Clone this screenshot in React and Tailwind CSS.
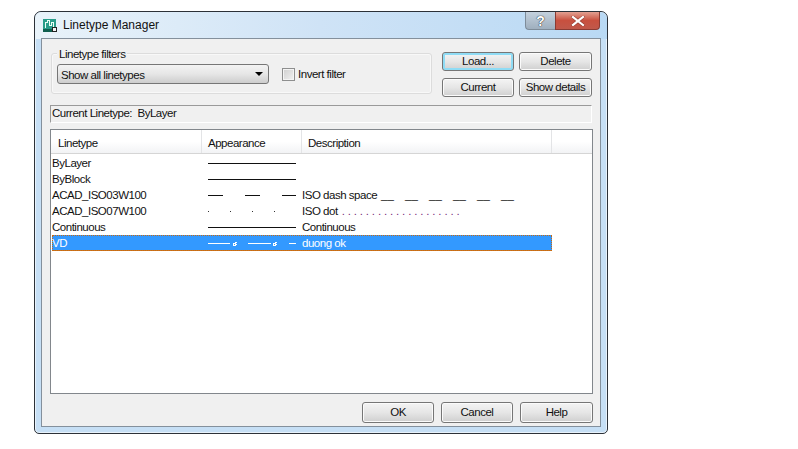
const font = { fontFamily: '"Liberation Sans", Arial, sans-serif' };

function Btn({ children, className = "" }) {
  return (
    <button
      className={`flex items-center justify-center rounded-[3px] border border-[#767676] bg-gradient-to-b from-[#f4f4f4] via-[#e6e6e6] to-[#cfcfcf] text-[11.5px] tracking-[-0.48px] text-[#111] shadow-[inset_0_0_0_1px_#fbfbfb] ${className}`}
    >
      {children}
    </button>
  );
}

function Ok({ x }) {
  return (
    <g shapeRendering="crispEdges" fill="none" stroke="white" strokeWidth="1">
      <rect x={x + 1.5} y="4.5" width="2" height="2" />
      <path d={`M${x + 3} 3.5H${x + 5}M${x + 4} 5.5H${x + 5}`} />
    </g>
  );
}

function Appearance({ type }) {
  const cls = "h-[9px] w-[90px] block";
  if (type === "solid")
    return (
      <svg className={cls} viewBox="0 0 90 9" shapeRendering="crispEdges">
        <path d="M0 4.5H88" stroke="#111" />
      </svg>
    );
  if (type === "dash")
    return (
      <svg className={cls} viewBox="0 0 90 9" shapeRendering="crispEdges">
        <path d="M0 4.5H15M37 4.5H52M74 4.5H88" stroke="#111" />
      </svg>
    );
  if (type === "dot")
    return (
      <svg className={cls} viewBox="0 0 90 9" shapeRendering="crispEdges">
        <path d="M0 4.5H1M22 4.5H23M44 4.5H45M66 4.5H67" stroke="#333" />
      </svg>
    );
  return (
    <svg className={cls} viewBox="0 0 90 9">
      <path d="M0 4.5H22M40 4.5H63M81 4.5H88" stroke="white" strokeWidth="1" shapeRendering="crispEdges" />
      <Ok x={24} />
      <Ok x={64} />
    </svg>
  );
}

const rows = [
  { name: "ByLayer", type: "solid", desc: null },
  { name: "ByBlock", type: "solid", desc: null },
  {
    name: "ACAD_ISO03W100",
    type: "dash",
    desc: (
      <span className="flex">
        <span>ISO dash space</span>
        <span className="ml-[4px] flex gap-[11.2px] tracking-normal">
          {[0, 1, 2, 3, 4, 5].map((i) => (
            <span key={i}>__</span>
          ))}
        </span>
      </span>
    ),
  },
  {
    name: "ACAD_ISO07W100",
    type: "dot",
    desc: (
      <span className="flex">
        <span>ISO dot</span>
        <span className="ml-[4px] tracking-[2.85px] text-[#7a2a7a]">{"...................."}</span>
      </span>
    ),
  },
  { name: "Continuous", type: "solid", desc: "Continuous" },
  { name: "VD", type: "vd", desc: "duong ok", selected: true },
];

export default function App() {
  return (
    <div className="h-[449px] w-[798px] bg-white pl-[34px] pt-[11px]" style={font}>
      <div className="flex h-[423px] w-[574px] flex-col rounded-t-[7px] rounded-b-[5px] border border-[#2c3138] bg-[#c6dff5] px-[6px] pb-[6px] shadow-[inset_0_0_0_1px_#e8f2fb]">
        <div className="flex h-[27px] shrink-0 -mx-[6px] -mb-px rounded-t-[7px] bg-gradient-to-r from-[#e9f3fa] via-[#cfe3f6] to-[#b9d9f4] pl-[8px] pr-[7px]">
          <svg className="mt-[7px] h-[14px] w-[15px]" viewBox="0 0 15 14" shapeRendering="crispEdges">
            <rect x="0" y="0" width="13" height="10" fill="#2a9d8a" />
            <path d="M2.5 9V3H4.5V1.5H6.5V6H8.5V3H10.5V9" fill="none" stroke="#eafff6" strokeWidth="1" />
            <rect x="0" y="10" width="9" height="3" fill="#0f5f4f" />
            <rect x="9.5" y="8.5" width="4" height="4" fill="#f5f5f5" stroke="#222" />
          </svg>
          <span className="ml-[5px] mt-[5px] text-[12px] leading-[17px] text-[#111]">Linetype Manager</span>
          <div className="ml-auto flex h-[18px]">
            <div className="flex w-[30px] items-center justify-center rounded-bl-[4px] border border-t-0 border-r-0 border-[#7e8c99] bg-gradient-to-b from-[#c4d1dd] to-[#9fafbe] text-[14px] font-bold leading-none text-white [text-shadow:0_0_1px_#222,0_0_1px_#222]">
              ?
            </div>
            <div className="flex w-[45px] items-center justify-center rounded-br-[4px] border border-t-0 border-[#8a3b33] bg-gradient-to-b from-[#e2a092] via-[#c8503f] to-[#c0584a]">
              <svg className="h-[10px] w-[14px]" viewBox="0 0 14 10">
                <path d="M2 1L12 9M12 1L2 9" stroke="#6b2a22" strokeWidth="3.4" strokeLinecap="square" opacity="0.55" />
                <path d="M2 1L12 9M12 1L2 9" stroke="#fff" strokeWidth="2.2" strokeLinecap="square" />
              </svg>
            </div>
          </div>
        </div>

        <div className="flex min-h-0 flex-1 flex-col border border-[#84909c] bg-[#f0f0f0] pl-[8px] pr-[7px] text-[11.5px] tracking-[-0.48px] text-[#111]">
          <div className="mt-[13px] flex h-[45px] shrink-0 pr-px">
            <div className="relative mt-px h-[41px] w-[381px] ml-px rounded-[3px] border border-[#dcdcdc] shadow-[inset_0_0_0_1px_#f8f8f8]">
              <span className="absolute left-[5px] top-[-7px] bg-[#f0f0f0] px-[2px] leading-[14px]">Linetype filters</span>
              <div className="ml-[5px] mt-[10px] flex items-center">
                <div className="flex h-[20px] w-[212px] items-center justify-between rounded-[3px] border border-[#767676] bg-gradient-to-b from-[#f3f3f3] via-[#e6e6e6] to-[#cdcdcd] pl-[3px] pr-[5px]">
                  <span className="pt-[4px]">Show all linetypes</span>
                  <svg className="h-[4px] w-[8px]" viewBox="0 0 8 4"><path d="M0 0H8L4 4Z" fill="#000" /></svg>
                </div>
                <div className="ml-[13px] h-[13px] w-[13px] border border-[#8e8f8f] bg-gradient-to-br from-[#cfcfcf] to-[#f2f2f2] shadow-[inset_0_0_0_1px_#f4f4f4]" />
                <span className="ml-[3px] pt-px">Invert filter</span>
              </div>
            </div>
            <div className="ml-[10px] grid grid-cols-[72px_73px] grid-rows-[19px_19px] gap-x-[5px] gap-y-[7px]">
              <Btn className="border-[#3c7fb1] shadow-[inset_0_0_0_2px_#8fdcf5]">Load...</Btn>
              <Btn>Delete</Btn>
              <Btn>Current</Btn>
              <Btn>Show details</Btn>
            </div>
          </div>

          <div className="mt-[8px] mr-px flex h-[18px] shrink-0 items-center border border-b-white border-r-white border-t-[#9a9a9a] border-l-[#9a9a9a] pl-px">
            <span className="whitespace-pre">Current Linetype:  ByLayer</span>
          </div>

          <div className="mt-[6px] h-[265px] shrink-0 border border-[#82878c] bg-white">
            <div className="grid h-[24px] grid-cols-[151px_100px_250px_1fr] border-b border-[#d5d5d5] bg-gradient-to-b from-white from-50% to-[#f2f3f5]">
              {["Linetype", "Appearance", "Description", ""].map((h) => (
                <div key={h} className="flex items-center border-r border-[#e3e4e6] pl-[6px] pt-[5px] first:pl-[7px] last:border-r-0">
                  {h}
                </div>
              ))}
            </div>
            <div className="pl-px pt-px">
              {rows.map((r) => (
                <div
                  key={r.name}
                  className={`grid h-[16px] w-[500px] grid-cols-[150px_100px_250px] items-center leading-[16px] ${
                    r.selected
                      ? "bg-[#3399ff] text-white shadow-[inset_0_-1px_0_#c8741f] outline outline-1 -outline-offset-1 outline-dotted outline-[#c96a10]"
                      : ""
                  }`}
                >
                  <div>{r.name}</div>
                  <div className="pl-[6px]"><Appearance type={r.type} /></div>
                  <div>{r.desc}</div>
                </div>
              ))}
            </div>
          </div>

          <div className="mt-[8px] flex justify-end gap-[7px]">
            <Btn className="h-[21px] w-[72px]">OK</Btn>
            <Btn className="h-[21px] w-[72px]">Cancel</Btn>
            <Btn className="h-[21px] w-[73px]">Help</Btn>
          </div>
        </div>
      </div>
    </div>
  );
}
